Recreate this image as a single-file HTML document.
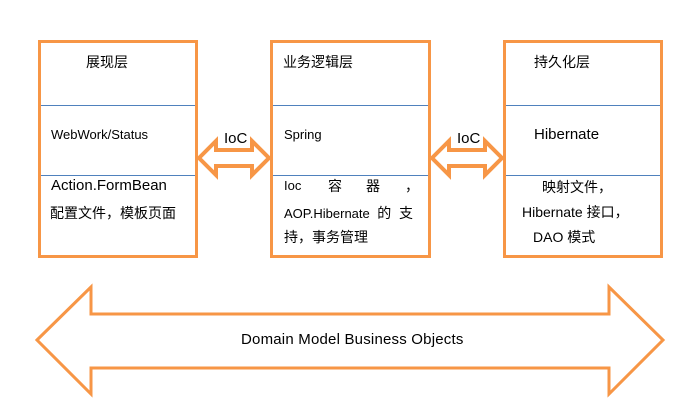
<!DOCTYPE html>
<html><head><meta charset="utf-8"><style>
body{margin:0;background:#fff;width:693px;height:409px;overflow:hidden;font-family:"Liberation Sans","Noto Sans CJK SC",sans-serif;}
svg{position:absolute;left:0;top:0}
.t{position:absolute;white-space:nowrap;color:#000}
</style></head><body>
<svg width="693" height="409">
<g fill="none" stroke="#F79646" stroke-width="3">
<rect x="39.5" y="41.5" width="157" height="215"/>
<rect x="271.5" y="41.5" width="158" height="215"/>
<rect x="504.5" y="41.5" width="157" height="215"/>
</g>
<g stroke="#4F81BD" stroke-width="1">
<line x1="41" y1="105.5" x2="195" y2="105.5"/><line x1="41" y1="175.5" x2="195" y2="175.5"/>
<line x1="273" y1="105.5" x2="428" y2="105.5"/><line x1="273" y1="175.5" x2="428" y2="175.5"/>
<line x1="506" y1="105.5" x2="660" y2="105.5"/><line x1="506" y1="175.5" x2="660" y2="175.5"/>
</g>
<g fill="#fff" stroke="#F79646" stroke-width="4" stroke-linejoin="miter">
<path d="M199 158 L216 141 L216 150 L252 150 L252 141 L269 158 L252 175 L252 166 L216 166 L216 175 Z"/>
<path d="M432 158 L449 141 L449 150 L485 150 L485 141 L502 158 L485 175 L485 166 L449 166 L449 175 Z"/>
</g>
<path d="M37 340 L91 287 L91 314 L609 314 L609 287 L663 340 L609 394 L609 368 L91 368 L91 394 Z" fill="none" stroke="#F79646" stroke-width="3"/>
</svg>
<div class="t" style="left:86px;top:52px;font-size:14px">展现层</div>
<div class="t" style="left:51px;top:127px;font-size:13px">WebWork/Status</div>
<div class="t" style="left:51px;top:177px;font-size:15px">Action.FormBean</div>
<div class="t" style="left:50px;top:203px;font-size:14px">配置文件，模板页面</div>
<div class="t" style="left:224px;top:130px;font-size:15px">IoC</div>
<div class="t" style="left:283px;top:52px;font-size:14px">业务逻辑层</div>
<div class="t" style="left:284px;top:127px;font-size:13px">Spring</div>
<div class="t" style="left:284px;top:178px;font-size:13px;width:130px">Ioc<span style="position:absolute;left:44px;font-size:14px;top:-2px">容</span><span style="position:absolute;left:82px;font-size:14px;top:-2px">器</span><span style="position:absolute;left:121px;font-size:14px;top:-2px">，</span></div>
<div class="t" style="left:284px;top:203px;font-size:13px">AOP.Hibernate <span style="font-size:14px">&nbsp;的&nbsp; 支</span></div>
<div class="t" style="left:284px;top:227px;font-size:14px">持，事务管理</div>
<div class="t" style="left:457px;top:130px;font-size:15px">IoC</div>
<div class="t" style="left:534px;top:52px;font-size:14px">持久化层</div>
<div class="t" style="left:534px;top:126px;font-size:15px">Hibernate</div>
<div class="t" style="left:542px;top:177px;font-size:14px">映射文件，</div>
<div class="t" style="left:522px;top:202px;font-size:14px">Hibernate 接口，</div>
<div class="t" style="left:533px;top:227px;font-size:14px">DAO 模式</div>
<div class="t" style="left:241px;top:331px;font-size:15px;letter-spacing:0.2px">Domain Model Business Objects</div>
</body></html>
